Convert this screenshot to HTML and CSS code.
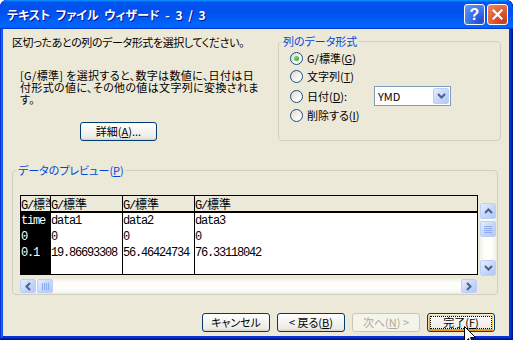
FILE: index.html
```html
<!DOCTYPE html>
<html lang="ja">
<head>
    <meta charset="UTF-8">
    <title>テキスト ファイル ウィザード - 3 / 3</title>
    <link rel="stylesheet" href="styles.css">
</head>
<body>
    <div class="window">
        <div class="titlebar">
            <span class="title">テキスト ファイル ウィザード - 3 / 3</span>
            <div class="caption-buttons">
                <span class="cap-btn help">?</span>
                <span class="cap-btn close">
                    <svg width="11" height="11" viewBox="0 0 11 11"><path d="M1.5 1.5 L9.5 9.5 M9.5 1.5 L1.5 9.5" stroke="#fff" stroke-width="2.2" stroke-linecap="square"/></svg>
                </span>
            </div>
        </div>

        <div class="client">
            <div class="top">
                <div class="intro">
                    <p class="lead">区切ったあとの列のデータ形式を選択してください。</p>
                    <p class="note">[G/標準] を選択すると、数字は数値に、日付は日<br>付形式の値に、その他の値は文字列に変換されま<br>す。</p>
                    <button class="btn detail">詳細(<u>A</u>)...</button>
                </div>

                <fieldset class="group format">
                    <legend>列のデータ形式</legend>
                    <div class="format-body">
                        <div class="radio-row"><span class="radio checked"></span><span>G/標準(<u>G</u>)</span></div>
                        <div class="radio-row"><span class="radio"></span><span>文字列(<u>T</u>)</span></div>
                        <div class="radio-row date">
                            <span class="radio-label"><span class="radio"></span><span>日付(<u>D</u>):</span></span>
                            <div class="combo">
                                <span class="combo-text">YMD</span>
                                <span class="combo-btn">
                                    <svg width="9" height="6" viewBox="0 0 9 6"><path d="M1 1 L4.5 4.5 L8 1" fill="none" stroke="#4d6185" stroke-width="2"/></svg>
                                </span>
                            </div>
                        </div>
                        <div class="radio-row short"><span class="radio"></span><span>削除する(<u>I</u>)</span></div>
                    </div>
                </fieldset>
            </div>

            <fieldset class="group preview">
                <legend>データのプレビュー(<u>P</u>)</legend>
                <div class="preview-body">
                    <div class="preview-table">
                        <div class="col selected">
                            <div class="col-head">G/<span class="wide">標準</span></div>
                            <div class="col-body">
                                <div class="cell">time</div>
                                <div class="cell">0</div>
                                <div class="cell">0.1</div>
                            </div>
                        </div>
                        <div class="col">
                            <div class="col-head">G/<span class="wide">標準</span></div>
                            <div class="col-body">
                                <div class="cell">data1</div>
                                <div class="cell">0</div>
                                <div class="cell">19.86693308</div>
                            </div>
                        </div>
                        <div class="col">
                            <div class="col-head">G/<span class="wide">標準</span></div>
                            <div class="col-body">
                                <div class="cell">data2</div>
                                <div class="cell">0</div>
                                <div class="cell">56.46424734</div>
                            </div>
                        </div>
                        <div class="col last">
                            <div class="col-head">G/<span class="wide">標準</span></div>
                            <div class="col-body">
                                <div class="cell">data3</div>
                                <div class="cell">0</div>
                                <div class="cell">76.33118042</div>
                            </div>
                        </div>
                    </div>

                    <div class="vscroll">
                        <span class="sb-btn">
                            <svg width="9" height="6" viewBox="0 0 9 6"><path d="M1 5 L4.5 1.5 L8 5" fill="none" stroke="#4d6185" stroke-width="2"/></svg>
                        </span>
                        <span class="sb-btn thumb">
                            <svg width="8" height="7" viewBox="0 0 8 7"><path d="M0 0.5 H8 M0 2.5 H8 M0 4.5 H8 M0 6.5 H8" stroke="#8caaf0" stroke-width="1"/></svg>
                        </span>
                        <span class="sb-btn down">
                            <svg width="9" height="6" viewBox="0 0 9 6"><path d="M1 1 L4.5 4.5 L8 1" fill="none" stroke="#4d6185" stroke-width="2"/></svg>
                        </span>
                    </div>

                    <div class="hscroll">
                        <span class="sb-btn">
                            <svg width="6" height="9" viewBox="0 0 6 9"><path d="M5 1 L1.5 4.5 L5 8" fill="none" stroke="#4d6185" stroke-width="2"/></svg>
                        </span>
                        <span class="sb-btn thumb">
                            <svg width="7" height="7" viewBox="0 0 7 7"><path d="M0.5 0 V7 M2.5 0 V7 M4.5 0 V7 M6.5 0 V7" stroke="#8caaf0" stroke-width="1"/></svg>
                        </span>
                        <span class="sb-btn right">
                            <svg width="6" height="9" viewBox="0 0 6 9"><path d="M1 1 L4.5 4.5 L1 8" fill="none" stroke="#4d6185" stroke-width="2"/></svg>
                        </span>
                    </div>
                </div>
            </fieldset>

            <div class="actions">
                <button class="btn">キャンセル</button>
                <button class="btn">&lt; 戻る(<u>B</u>)</button>
                <button class="btn" disabled>次へ(<u>N</u>) &gt;</button>
                <button class="btn default">完了(<u>F</u>)</button>
            </div>
        </div>

        <svg class="cursor" width="13" height="20" viewBox="0 0 13 20"><path d="M0.5 0.5 V16.5 L4.5 12.5 L7.5 19.5 L9.5 18.5 L6.5 11.5 L11.5 11.5 Z" fill="#fff" stroke="#000" stroke-width="1"/></svg>
    </div>
</body>
</html>
```

FILE: styles.css
```css
body {
    margin: 0;
    background: #ffffff;
    font-family: "Noto Sans CJK JP", sans-serif;
    font-size: 11px;
    font-feature-settings: "palt";
    color: #000;
}
.window {
    position: relative;
    width: 513px;
    height: 340px;
    display: flex;
    flex-direction: column;
    overflow: hidden;
    border-radius: 7px 7px 0 0;
    background-color: #0831d9;
    box-shadow: inset -1px -1px #00138c, inset 1px 1px #0831d9, inset -2px -2px #001ea0, inset 2px 2px #166aee, inset -3px -3px #003bda, inset 3px 3px #0855dd;
}
.titlebar {
    height: 29px;
    flex-shrink: 0;
    display: flex;
    align-items: center;
    padding: 0 5px 0 7px;
    background: linear-gradient(180deg, #0997ff, #0053ee 8%, #0050ee 40%, #06f 88%, #06f 93%, #005bff 95%, #003dd7 96%, #003dd7);
    border-radius: 7px 7px 0 0;
}
.title {
    flex: 1;
    color: #fff;
    font-weight: bold;
    font-size: 12px;
    word-spacing: 3px;
    text-shadow: 1px 1px #0f1089;
    white-space: nowrap;
}
.caption-buttons {
    display: flex;
    gap: 2px;
}
.cap-btn {
    width: 21px;
    height: 21px;
    box-sizing: border-box;
    border: 1px solid #fff;
    border-radius: 3px;
    display: flex;
    align-items: center;
    justify-content: center;
    color: #fff;
    font-family: "Liberation Sans", sans-serif;
    font-weight: bold;
    font-size: 16px;
}
.cap-btn.help {
    background: radial-gradient(circle at 80% 85%, #1e4ed0 0, #3a6ee8 45%, #6f9af6 100%);
}
.cap-btn.close {
    background: radial-gradient(circle at 80% 85%, #c53d1e 0, #e0582f 45%, #f08a6a 100%);
}
.client {
    flex: 1;
    margin: 0 4px 4px 3px;
    background: #ece9d8;
    padding: 6px 0 0 9px;
    display: flex;
    flex-direction: column;
}
.top {
    display: flex;
}
.intro {
    width: 266px;
}
.lead {
    margin: 0;
    line-height: 15px;
    letter-spacing: -0.4px;
    white-space: nowrap;
}
.note {
    margin: 19px 0 0 8px;
    line-height: 12px;
    letter-spacing: 0.35px;
    white-space: nowrap;
}
.btn {
    font-family: "Noto Sans CJK JP", sans-serif;
    font-size: 11px;
    font-feature-settings: "palt";
    width: 68px;
    height: 19px;
    padding: 0;
    line-height: 15px;
    color: #000;
    border: 1px solid #003c74;
    border-radius: 3px;
    background: linear-gradient(180deg, #fff, #ecebe5 86%, #d8d0c4);
}
.btn:disabled {
    color: #aca899;
    border-color: #c9c7ba;
    background: #f5f4ea;
}
.btn.detail {
    display: block;
    width: 77px;
    margin: 17px 0 0 68px;
}
.btn.default {
    box-shadow: inset -1px 1px #fff0cf, inset 1px 2px #fdd889, inset -2px 2px #fbc761, inset 2px -2px #e5a01a;
    outline: 1px dotted #000;
    outline-offset: -4px;
}
.group {
    margin: 0;
    padding: 0;
    box-sizing: border-box;
    border: 1px solid #d0d0bf;
    border-radius: 4px;
    min-width: 0;
}
.group legend {
    color: #0046d5;
    padding: 0 1px;
}
.format {
    width: 223px;
}
.format legend {
    margin-left: 3px;
    line-height: 12px;
}
.format-body {
    padding: 2px 0 3px 11px;
}
.radio-row {
    display: flex;
    align-items: center;
    gap: 4px;
    height: 18px;
}
.radio-row.date {
    height: 22px;
}
.radio-row.short {
    height: 16px;
}
.radio-label {
    display: flex;
    align-items: center;
    gap: 4px;
    width: 80px;
}
.radio {
    width: 13px;
    height: 13px;
    flex-shrink: 0;
    box-sizing: border-box;
    border: 1px solid #1c5180;
    border-radius: 50%;
    background: linear-gradient(135deg, #dcd9cf, #f7f6f2 60%, #fff);
    display: flex;
    align-items: center;
    justify-content: center;
}
.radio.checked::after {
    content: "";
    width: 5px;
    height: 5px;
    border-radius: 50%;
    background: radial-gradient(circle at 35% 35%, #6ee46e, #21a121);
}
.combo {
    width: 77px;
    height: 20px;
    box-sizing: border-box;
    border: 1px solid #7f9db9;
    background: #fff;
    display: flex;
    align-items: center;
}
.combo-text {
    flex: 1;
    padding-left: 3px;
}
.combo-btn,
.sb-btn {
    box-sizing: border-box;
    border: 1px solid #bcd0f7;
    border-radius: 2px;
    background: linear-gradient(135deg, #e6eefc, #c2d4fa 60%, #b2c8f6);
    display: flex;
    align-items: center;
    justify-content: center;
}
.combo-btn {
    width: 16px;
    height: 16px;
    margin-right: 1px;
}
.preview {
    width: 486px;
    margin-top: 22px;
}
.preview legend {
    margin-left: 4px;
    line-height: 14px;
}
.preview-body {
    display: grid;
    grid-template-columns: 458px 16px;
    grid-template-rows: 80px 14px;
    column-gap: 2px;
    row-gap: 4px;
    padding: 18px 1px 1px 7px;
}
.preview-table {
    grid-column: 1;
    grid-row: 1;
    display: flex;
    border: 1px solid #000;
    background: #fff;
    font-family: "Liberation Mono", monospace;
    font-size: 12px;
    font-feature-settings: normal;
    letter-spacing: -1.2px;
    overflow: hidden;
}
.col {
    display: flex;
    flex-direction: column;
    border-right: 1px solid #000;
    flex-shrink: 0;
}
.col:nth-child(1) { width: 29px; }
.col:nth-child(2),
.col:nth-child(3) { width: 71px; }
.col.last {
    flex: 1;
    border-right: none;
}
.col-head {
    height: 15px;
    line-height: 15px;
    background: #ece9d8;
    border-bottom: 2px solid #000;
    white-space: nowrap;
    overflow: hidden;
}
.wide {
    font-family: "Noto Sans CJK JP", sans-serif;
    letter-spacing: 0;
}
.col-body {
    flex: 1;
}
.col.selected .col-body {
    background: #000;
    color: #fff;
}
.cell {
    height: 16px;
    line-height: 16px;
    white-space: nowrap;
}
.vscroll {
    grid-column: 2;
    grid-row: 1 / span 2;
    align-self: start;
    margin-top: 8px;
    height: 73px;
    display: flex;
    flex-direction: column;
    background: linear-gradient(90deg, #f3f1ec, #fefefb 30%, #fefefb 70%, #f3f1ec);
}
.vscroll .sb-btn {
    width: 16px;
    height: 16px;
}
.vscroll .thumb {
    margin-top: 2px;
}
.vscroll .down {
    margin-top: auto;
}
.hscroll {
    grid-column: 1;
    grid-row: 2;
    display: flex;
    background: linear-gradient(180deg, #f3f1ec, #fefefb 30%, #fefefb 70%, #f3f1ec);
    margin-right: 1px;
}
.hscroll .sb-btn {
    width: 16px;
    height: 14px;
}
.hscroll .thumb {
    margin-left: 1px;
}
.hscroll .right {
    margin-left: auto;
}
.actions {
    display: flex;
    justify-content: flex-end;
    gap: 7px;
    margin-top: 18px;
    padding-right: 14px;
}
.cursor {
    position: absolute;
    left: 464px;
    top: 326px;
}
```
